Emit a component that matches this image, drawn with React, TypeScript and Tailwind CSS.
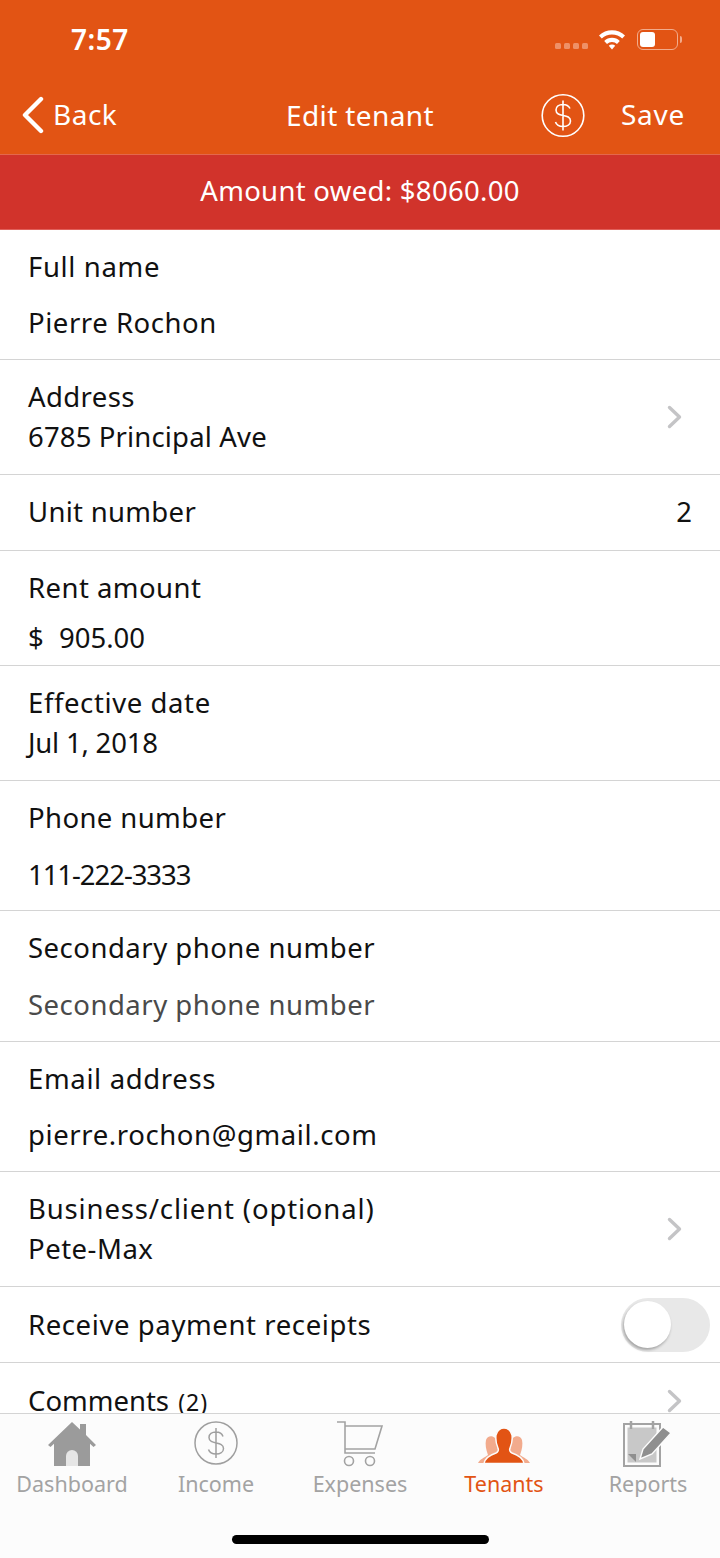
import React from "react";

const font = { fontFamily: '"Noto Sans", sans-serif' };

function Chevron() {
  return (
    <svg width="16" height="24" viewBox="0 0 16 24">
      <path d="M2.5 2.5 L12.5 12 L2.5 21.5" fill="none" stroke="#c4c4c6" strokeWidth="3.4" strokeLinecap="round" strokeLinejoin="round" />
    </svg>
  );
}

function TwoLine({ label, value, muted, h = "h-[130px]", lt = "", vt = "", vm = "mt-[20px]" }: { label: string; value: string; muted?: boolean; h?: string; lt?: string; vt?: string; vm?: string }) {
  return (
    <div className={`${h} shrink-0 border-b border-[#d4d4d4] px-[28px] flex flex-col`}>
      <div className={`h-[36px] mt-[19px] leading-[36px] ${lt}`}>{label}</div>
      <div className={`h-[36px] leading-[36px] ${vm} ${vt} ${muted ? "text-[#4a4a4a]" : ""}`}>{value}</div>
    </div>
  );
}

function NavRow({ label, value, lt = "", vt = "" }: { label: string; value: string; lt?: string; vt?: string }) {
  return (
    <div className="h-[115px] shrink-0 border-b border-[#d4d4d4] pl-[28px] pr-[37px] flex items-center justify-between">
      <div className="flex flex-col">
        <div className={`h-[36px] leading-[36px] mt-[-1px] ${lt}`}>{label}</div>
        <div className={`h-[36px] leading-[36px] mt-[4px] ${vt}`}>{value}</div>
      </div>
      <Chevron />
    </div>
  );
}

function Tab({ label, active, children }: { label: string; active?: boolean; children: React.ReactNode }) {
  return (
    <div className="flex-1 flex flex-col items-center">
      <div className="h-[53px] flex items-end justify-center">{children}</div>
      <div className={`text-[21.5px] leading-[30px] mt-[2px] ${active ? "text-[#e25414]" : "text-[#a3a3a3]"}`}>{label}</div>
    </div>
  );
}

export default function App() {
  return (
    <div className="w-[720px] h-[1558px] overflow-hidden bg-white flex flex-col text-[#111] text-[27.5px]" style={font}>
      <div className="h-[155px] shrink-0 bg-[#e25414] border-b border-[#e4674c] text-white flex flex-col">
        <div className="h-[78px] relative flex items-center">
          <span className="ml-[71px] text-[28px] font-semibold leading-none tracking-[0.5px]">7:57</span>
          <div className="absolute left-[555px] top-[43px] flex gap-[3px]">
            <i className="w-[6px] h-[6px] rounded-[1.5px] bg-[#ee9067]" />
            <i className="w-[6px] h-[6px] rounded-[1.5px] bg-[#ee9067]" />
            <i className="w-[6px] h-[6px] rounded-[1.5px] bg-[#ee9067]" />
            <i className="w-[6px] h-[6px] rounded-[1.5px] bg-[#ee9067]" />
          </div>
          <svg className="absolute left-[598px] top-[28px]" width="28" height="22" viewBox="0 0 28 22">
            <path d="M1 7.5 A18.5 18.5 0 0 1 27 7.5 L24.2 10.6 A14.5 14.5 0 0 0 3.8 10.6 Z" fill="#fff" />
            <path d="M6.2 13 A11 11 0 0 1 21.8 13 L19 16 A7 7 0 0 0 9 16 Z" fill="#fff" />
            <path d="M10.8 17.8 A4.6 4.6 0 0 1 17.2 17.8 L14 21.4 Z" fill="#fff" />
          </svg>
          <div className="absolute left-[637px] top-[29px] w-[41px] h-[21px] rounded-[6px] border-[1.5px] border-[#f2ab8b] p-[2px]">
            <div className="w-[15px] h-full rounded-[3px] bg-white" />
          </div>
          <div className="absolute left-[680px] top-[36px] w-[2px] h-[7px] rounded-r-[2px] bg-[#f2ab8b]" />
        </div>
        <div className="flex-1 relative flex items-center justify-center">
          <svg className="absolute left-[21px] top-[18px]" width="24" height="38" viewBox="0 0 24 38">
            <path d="M20 3 L4 19 L20 35" fill="none" stroke="#fff" strokeWidth="4.4" strokeLinecap="round" strokeLinejoin="round" />
          </svg>
          <span className="absolute left-[53px] top-[17px] leading-[38px] text-[28px] tracking-[0.5px]">Back</span>
          <span className="leading-[38px] text-[28px] mt-[-3px] tracking-[0.4px]">Edit tenant</span>
          <svg className="absolute left-[541px] top-[15px]" width="44" height="45" viewBox="0 0 44 45">
            <circle cx="22" cy="22.5" r="20.8" fill="none" stroke="#fff" strokeWidth="1.6" />
            <path d="M29 15.5 C27.5 12.5 25 11.5 22 11.5 C18 11.5 15 13.5 15 17 C15 25 29.5 20 29.5 28 C29.5 31.5 26 33.5 22 33.5 C18.5 33.5 15.5 32 14.5 29 M22 7.5 V37.5" fill="none" stroke="#fff" strokeWidth="1.6" />
          </svg>
          <span className="absolute left-[621px] top-[17px] leading-[38px] text-[28px] tracking-[0.7px]">Save</span>
        </div>
      </div>
      <div className="h-[75px] shrink-0 bg-[#d1332b] border-b border-[#e0605a] text-white flex items-center justify-center">
        <span className="mt-[-2px] tracking-[0.3px]">Amount owed: $8060.00</span>
      </div>
      <div className="flex-1 min-h-0 overflow-hidden flex flex-col">
        <TwoLine label="Full name" value="Pierre Rochon" lt="tracking-[0.65px]" vt="tracking-[0.55px]" />
        <NavRow label="Address" value="6785 Principal Ave" lt="tracking-[0.4px]" vt="tracking-[0.15px]" />
        <div className="h-[76px] shrink-0 border-b border-[#d4d4d4] pl-[28px] pr-[28px] flex items-center justify-between">
          <span className="tracking-[0.3px] mt-[-2px]">Unit number</span>
          <span className="mt-[-2px]">2</span>
        </div>
        <div className="h-[115px] shrink-0 border-b border-[#d4d4d4] px-[28px] flex flex-col">
          <div className="h-[36px] leading-[36px] mt-[19px] tracking-[0.45px]">Rent amount</div>
          <div className="h-[36px] leading-[36px] mt-[14px] flex">
            <span className="w-[31px]">$</span>
            <span>905.00</span>
          </div>
        </div>
        <div className="h-[115px] shrink-0 border-b border-[#d4d4d4] px-[28px] flex flex-col">
          <div className="h-[36px] leading-[36px] mt-[19px] tracking-[0.6px]">Effective date</div>
          <div className="h-[36px] leading-[36px] mt-[4px] tracking-[-0.2px]">Jul 1, 2018</div>
        </div>
        <TwoLine label="Phone number" value="111-222-3333" lt="tracking-[0.4px]" vt="tracking-[-1.05px]" vm="mt-[21px]" />
        <TwoLine label="Secondary phone number" value="Secondary phone number" muted h="h-[131px]" lt="tracking-[0.5px]" vt="tracking-[0.5px]" vm="mt-[21px]" />
        <TwoLine label="Email address" value="pierre.rochon@gmail.com" lt="tracking-[0.65px]" vt="tracking-[0.6px]" />
        <NavRow label="Business/client (optional)" value="Pete-Max" lt="tracking-[0.85px]" vt="tracking-[0.5px]" />
        <div className="h-[76px] shrink-0 border-b border-[#d4d4d4] pl-[28px] pr-[10px] flex items-center justify-between">
          <span className="tracking-[0.6px]">Receive payment receipts</span>
          <div className="w-[89px] h-[54px] rounded-full bg-[#e8e8e8] relative">
            <div className="absolute left-[3px] top-[3px] w-[47px] h-[47px] rounded-full bg-white shadow-[-1px_2px_3px_rgba(0,0,0,0.3)]" />
          </div>
        </div>
        <div className="h-[76px] shrink-0 pl-[28px] pr-[37px] flex items-center justify-between">
          <span>
            Comments <span className="text-[23px] tracking-[1px] ml-[2px]">(2)</span>
          </span>
          <Chevron />
        </div>
      </div>
      <div className="h-[145px] shrink-0 bg-[#fcfcfc] border-t border-[#d4d4d4] relative flex items-start">
        <Tab label="Dashboard">
          <svg width="50" height="46" viewBox="0 0 50 46">
            <path d="M7 21 L25 5 L43 21 V45 H7 Z" fill="#9b9b9b" />
            <path d="M1 24 L25 1 L33 8.5 V3 H39 V14 L49 24 L46.5 26 L25 6 L3.5 26 Z" fill="#9b9b9b" />
            <path d="M19 45 V35 A6 6 0 0 1 31 35 V45 Z" fill="#e6e6e6" />
          </svg>
        </Tab>
        <Tab label="Income">
          <svg className="mb-[2px]" width="44" height="44" viewBox="0 0 44 44">
            <circle cx="22" cy="22" r="21" fill="none" stroke="#9f9f9f" strokeWidth="1.5" />
            <path d="M29 15.5 C28 12.5 25 11 22 11 C18 11 15 13 15 16.5 C15 24.5 29.5 19.5 29.5 27.5 C29.5 31 26 33 22 33 C18.5 33 15.5 31.5 14.5 28.5 M22 7 V37" fill="none" stroke="#9f9f9f" strokeWidth="1.5" />
          </svg>
        </Tab>
        <Tab label="Expenses">
          <svg width="46" height="46" viewBox="0 0 46 46">
            <path d="M0 1 H8 V32 H38 M8 5 H45 L38 28 H8" fill="none" stroke="#a3a3a3" strokeWidth="1.6" />
            <circle cx="12" cy="40" r="4.5" fill="none" stroke="#a3a3a3" strokeWidth="1.6" />
            <circle cx="33" cy="40" r="4.5" fill="none" stroke="#a3a3a3" strokeWidth="1.6" />
          </svg>
        </Tab>
        <Tab label="Tenants" active>
          <svg className="mb-[3px]" width="52" height="36" viewBox="0 0 52 36">
            <path d="M0 35 C2 31 6 30 10 27 C8 22 7 16 8 12 C9 8 14 7 17 10 L22 30 L12 35 Z" fill="#f2ab8d" />
            <path d="M52 35 C50 31 46 30 42 27 C44 22 45 16 44 12 C43 8 38 7 35 10 L30 30 L40 35 Z" fill="#f2ab8d" />
            <path d="M6 35.5 C7 30 12 27 18 25 C20 24 21 22 20 20 C18 16 17.5 12 18 7 C19 2 23 0 26 0 C29 0 33 2 34 7 C34.5 12 34 16 32 20 C31 22 32 24 34 25 C40 27 45 30 46 35.5 Z" fill="#e25414" stroke="#fcfcfc" strokeWidth="1.4" />
          </svg>
        </Tab>
        <Tab label="Reports">
          <svg width="50" height="46" viewBox="0 0 50 46">
            <rect x="1" y="3" width="36" height="42" fill="#fcfcfc" stroke="#a3a3a3" strokeWidth="2" />
            <rect x="4.5" y="6.5" width="29" height="35" fill="#c8c8c8" />
            <path d="M8 0 V8 M30 0 V8" stroke="#a3a3a3" strokeWidth="2.5" />
            <path d="M5 33 L13 33 V41 Z" fill="#8f8f8f" />
            <path d="M17 38 L20 28 L40 6 L48 12 L29 33 Z" fill="#8f8f8f" stroke="#fcfcfc" strokeWidth="1.4" />
          </svg>
        </Tab>
        <div className="absolute left-[232px] top-[121px] w-[257px] h-[9px] rounded-full bg-black" />
      </div>
    </div>
  );
}
